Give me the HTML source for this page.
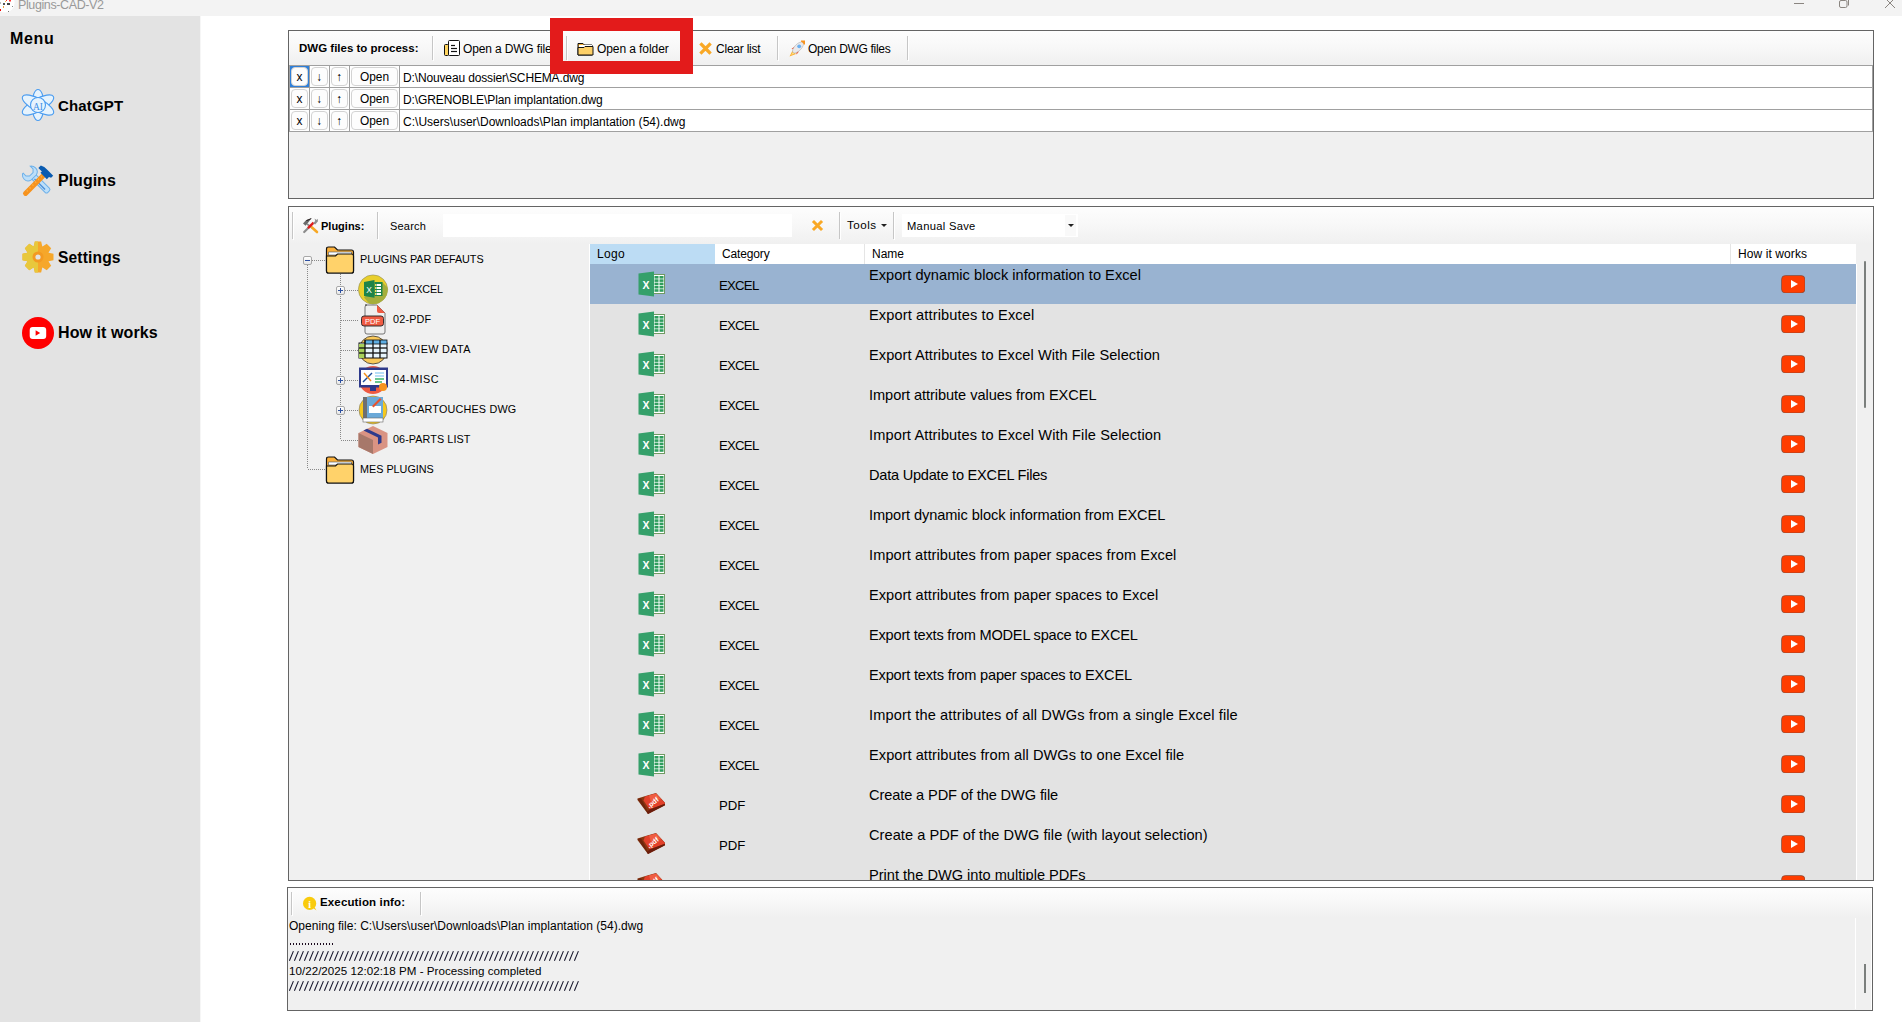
<!DOCTYPE html>
<html><head><meta charset="utf-8"><title>Plugins-CAD-V2</title>
<style>
html,body{margin:0;padding:0;width:1902px;height:1022px;overflow:hidden;background:#fff;font-family:"Liberation Sans", sans-serif;}
.a{position:absolute;}
.t{position:absolute;white-space:pre;line-height:1;font-family:"Liberation Sans", sans-serif;color:#000;}
</style></head><body>
<div class="a" style="left:0px;top:0px;width:1902px;height:16px;background:#f3f3f3"></div><svg class="a" style="left:0px;top:0px;overflow:visible" width="14" height="13" viewBox="0 0 14 13"><circle cx="5" cy="3" r="9.6" fill="#fff"/><rect x="6" y="0" width="1" height="1" fill="#f33"/><rect x="9" y="0" width="2" height="1.5" fill="#f33"/><rect x="0" y="9" width="1" height="2" fill="#e00"/><rect x="3" y="3" width="2" height="2" fill="#555"/><rect x="7" y="3" width="3" height="2" fill="#444"/><rect x="3" y="6" width="1" height="2" fill="#f0a040"/><rect x="5" y="1" width="1" height="1" fill="#f5c040"/><rect x="12" y="6" width="1" height="1" fill="#888"/><rect x="8" y="11" width="1" height="1" fill="#777"/><rect x="0" y="2" width="1" height="2" fill="#bbb"/></svg><div class="t" style="left:18px;top:-0.78px;font-size:12.5px;font-weight:normal;color:#999;letter-spacing:-0.385px;">Plugins-CAD-V2</div><div class="a" style="left:1794px;top:3px;width:10px;height:1px;background:#8a8580"></div><svg class="a" style="left:1838px;top:0px;overflow:visible" width="12" height="9" viewBox="0 0 12 9"><rect x="1.5" y="0.5" width="7.5" height="7" rx="1.5" fill="none" stroke="#8a8580" stroke-width="1"/><line x1="10.5" y1="0" x2="10.5" y2="5.5" stroke="#8a8580"/></svg><svg class="a" style="left:1885px;top:0px;overflow:visible" width="10" height="8" viewBox="0 0 10 8"><line x1="0" y1="-2" x2="10" y2="8" stroke="#8a8580"/><line x1="10" y1="-2" x2="0" y2="8" stroke="#8a8580"/></svg><div class="a" style="left:0px;top:16px;width:200px;height:1006px;background:#e3e3e3"></div><div class="a" style="left:200px;top:16px;width:1px;height:1006px;background:#f6f6f6"></div><div class="t" style="left:10px;top:30.96px;font-size:16px;font-weight:bold;color:#000;letter-spacing:0.667px;">Menu</div><div class="t" style="left:58px;top:98.30px;font-size:15px;font-weight:bold;color:#000;letter-spacing:0.167px;">ChatGPT</div><div class="t" style="left:58px;top:173.46px;font-size:16px;font-weight:bold;color:#000;letter-spacing:0.000px;">Plugins</div><div class="t" style="left:58px;top:249.79px;font-size:15.6px;font-weight:bold;color:#000;letter-spacing:0.143px;">Settings</div><div class="t" style="left:58px;top:325.46px;font-size:16px;font-weight:bold;color:#000;letter-spacing:0.091px;">How it works</div><svg class="a" style="left:22px;top:89px;overflow:visible" width="32" height="32" viewBox="0 0 32 32"><g fill="#e6f3fd" stroke="#4a9cf0" stroke-width="1.1">
<ellipse cx="16" cy="16" rx="6" ry="15.5" />
<ellipse cx="16" cy="16" rx="6.2" ry="17.6" transform="rotate(61 16 16)"/>
<ellipse cx="16" cy="16" rx="6.2" ry="17.6" transform="rotate(-61 16 16)"/>
<circle cx="16" cy="16" r="7.5"/></g>
<text x="16" y="20.5" text-anchor="middle" font-family="Liberation Serif" font-size="9.5" fill="#3f8fe6">AI</text></svg><svg class="a" style="left:22px;top:165px;overflow:visible" width="32" height="32" viewBox="0 0 32 32"><g transform="rotate(-45 16 16)">
<path d="M13 9 h6 v20 q0 2-2 2 h-2 q-2 0-2-2z" fill="#bddff9" stroke="#6cb0ea" stroke-width="1"/>
<path d="M15 12 v15" stroke="#4b8fd8" stroke-width="1.4"/>
<path d="M11 0 v4 l2.5 2.5 h5 l2.5-2.5 v-4 q2.5 2 2.5 5 q0 4.5-4.5 5.5 h-7 q-4.5-1-4.5-5.5 q0-3 2.5-5z" fill="#bddff9" stroke="#6cb0ea" stroke-width="1"/>
</g>
<g transform="rotate(45 16 16)">
<path d="M13.5 8 h5 v26 q0 2-2.5 2 q-2.5 0-2.5-2z" fill="#f7931e"/>
<path d="M14.5 10 l1.5 1 M14.5 14 l1.5 1 M14.5 18 l1.5 1 M14.5 22 l1.5 1 M14.5 26 l1.5 1 M14.5 30 l1.5 1" stroke="#fdb94e" stroke-width=".8"/>
<path d="M7 3 q3-2 8-1.5 h8 v3 l-2 1 v3 h-9 v-2 h-5z" fill="#0a5bb0"/>
</g></svg><svg class="a" style="left:22px;top:241px;overflow:visible" width="32" height="32" viewBox="0 0 32 32"><defs><clipPath id="gl"><rect x="0" y="0" width="16" height="32"/></clipPath></defs>
<path d="M11.73 5.32 L12.86 0.51 L19.14 0.51 L20.27 5.32 L20.54 5.43 L24.73 2.83 L29.17 7.27 L26.57 11.46 L26.68 11.73 L31.49 12.86 L31.49 19.14 L26.68 20.27 L26.57 20.54 L29.17 24.73 L24.73 29.17 L20.54 26.57 L20.27 26.68 L19.14 31.49 L12.86 31.49 L11.73 26.68 L11.46 26.57 L7.27 29.17 L2.83 24.73 L5.43 20.54 L5.32 20.27 L0.51 19.14 L0.51 12.86 L5.32 11.73 L5.43 11.46 L2.83 7.27 L7.27 2.83 L11.46 5.43z" fill="#f6a72a"/><path d="M11.73 5.32 L12.86 0.51 L19.14 0.51 L20.27 5.32 L20.54 5.43 L24.73 2.83 L29.17 7.27 L26.57 11.46 L26.68 11.73 L31.49 12.86 L31.49 19.14 L26.68 20.27 L26.57 20.54 L29.17 24.73 L24.73 29.17 L20.54 26.57 L20.27 26.68 L19.14 31.49 L12.86 31.49 L11.73 26.68 L11.46 26.57 L7.27 29.17 L2.83 24.73 L5.43 20.54 L5.32 20.27 L0.51 19.14 L0.51 12.86 L5.32 11.73 L5.43 11.46 L2.83 7.27 L7.27 2.83 L11.46 5.43z" fill="#e8c83c" clip-path="url(#gl)"/>
<circle cx="16" cy="16" r="5.5" fill="#f39a22"/><circle cx="16" cy="16" r="2.6" fill="#e3e3e3"/></svg><svg class="a" style="left:22px;top:317px;overflow:visible" width="32" height="32" viewBox="0 0 32 32"><circle cx="16" cy="16" r="16" fill="#f00"/><rect x="7.7" y="10" width="16.5" height="12" rx="3" fill="#fff"/><path d="M13.6 13.3 L18.2 16 L13.6 18.7z" fill="#f00"/></svg><div class="a" style="left:288px;top:30px;width:1586px;height:169px;background:#fff;border:1px solid #646464;box-sizing:border-box"></div><div class="a" style="left:289px;top:31px;width:1584px;height:34px;background:linear-gradient(#fdfdfd,#f8f8f8 45%,#f0f0f0)"></div><div class="a" style="left:289px;top:131px;width:1584px;height:67px;background:#f0f0f0"></div><div class="t" style="left:299px;top:43.27px;font-size:11.5px;font-weight:bold;color:#000;letter-spacing:0.000px;">DWG files to process:</div><div class="a" style="left:432px;top:36px;width:1px;height:24px;background:#c6c6c6"></div><div class="a" style="left:433px;top:37px;width:1px;height:24px;background:#fff"></div><svg class="a" style="left:444px;top:40px;overflow:visible" width="16" height="16" viewBox="0 0 16 16"><rect x="4.5" y="0.5" width="11" height="15" rx="1" fill="#fff" stroke="#111"/><rect x="0.5" y="4.5" width="4" height="11" rx="1" fill="#ffd45e" stroke="#111"/>
<g stroke="#111" stroke-width="1.2"><line x1="7" y1="5.5" x2="11" y2="5.5"/><line x1="7" y1="8.5" x2="13" y2="8.5"/><line x1="7" y1="11.5" x2="13" y2="11.5"/></g></svg><div class="t" style="left:463px;top:42.84px;font-size:12px;font-weight:normal;color:#000;letter-spacing:-0.15px">Open a DWG file</div><div class="a" style="left:566px;top:36px;width:1px;height:24px;background:#c6c6c6"></div><div class="a" style="left:567px;top:37px;width:1px;height:24px;background:#fff"></div><svg class="a" style="left:577px;top:41px;overflow:visible" width="17" height="15" viewBox="0 0 17 15"><path d="M1 2.5 h5 l1.5 1.5 h7.5 v10 h-14z" fill="#f9b233" stroke="#111"/><rect x="2" y="4" width="13" height="2" fill="#fff"/><path d="M1 6.5 h6 l1-1 h8 v8.5 h-15z" fill="#fdd068" stroke="#111"/></svg><div class="t" style="left:597px;top:42.84px;font-size:12px;font-weight:normal;color:#000;letter-spacing:-0.083px;">Open a folder</div><div class="a" style="left:684px;top:36px;width:1px;height:24px;background:#c6c6c6"></div><div class="a" style="left:685px;top:37px;width:1px;height:24px;background:#fff"></div><svg class="a" style="left:699px;top:42px;overflow:visible" width="13" height="13" viewBox="0 0 13 13"><path d="M2.5 2.5 L10.5 10.5 M10.5 2.5 L2.5 10.5" stroke="#f9a825" stroke-width="3.2" stroke-linecap="square"/></svg><div class="t" style="left:716px;top:42.84px;font-size:12px;font-weight:normal;color:#000;letter-spacing:-0.222px;">Clear list</div><div class="a" style="left:777px;top:36px;width:1px;height:24px;background:#c6c6c6"></div><div class="a" style="left:778px;top:37px;width:1px;height:24px;background:#fff"></div><svg class="a" style="left:789px;top:40px;overflow:visible" width="16" height="17" viewBox="0 0 16 17"><path d="M0.5 16.5 l3-6 3.5 3.5z" fill="#fbb034"/><path d="M2 15 l2-3 1.5 1.5z" fill="#ffe082"/>
<path d="M2.5 9 l3-2.5 1 3z M7.5 14.5 l2.5-3 -3-1z" fill="#ef4b25"/>
<ellipse cx="9" cy="7.5" rx="3.3" ry="7" transform="rotate(45 9 7.5)" fill="#e9e9ec" stroke="#b5b5b5" stroke-width=".6"/>
<circle cx="10.2" cy="6.3" r="1.9" fill="#6ab0f0"/>
<path d="M12 0.5 h4 v4 l-1.2 0 c-.5-1.5-1.5-2.5-2.8-2.8z" fill="#f7931e"/></svg><div class="t" style="left:808px;top:42.84px;font-size:12px;font-weight:normal;color:#000;letter-spacing:-0.308px;">Open DWG files</div><div class="a" style="left:907px;top:36px;width:1px;height:24px;background:#c6c6c6"></div><div class="a" style="left:908px;top:37px;width:1px;height:24px;background:#fff"></div><div class="a" style="left:289px;top:65px;width:1584px;height:1px;background:#a0a0a0"></div><div class="a" style="left:289px;top:66px;width:1583px;height:21px;background:#fff"></div><div class="a" style="left:289px;top:87px;width:1584px;height:1px;background:#a0a0a0"></div><div class="a" style="left:290px;top:66px;width:19px;height:21px;background:#2f7fd8"></div><div class="a" style="left:291px;top:67px;width:17px;height:19px;background:#fdfdfd;border:1px solid #d3d3d3;border-radius:4px;box-sizing:border-box"></div><div class="t" style="left:290px;top:71.53px;width:19px;text-align:center;font-size:11.9px">x</div><div class="a" style="left:311px;top:67px;width:17px;height:19px;background:#fdfdfd;border:1px solid #d3d3d3;border-radius:4px;box-sizing:border-box"></div><div class="t" style="left:310px;top:71.53px;width:19px;text-align:center;font-size:11.9px">&#8595;</div><div class="a" style="left:331px;top:67px;width:17px;height:19px;background:#fdfdfd;border:1px solid #d3d3d3;border-radius:4px;box-sizing:border-box"></div><div class="t" style="left:330px;top:71.53px;width:19px;text-align:center;font-size:11.9px">&#8593;</div><div class="a" style="left:351px;top:67px;width:47px;height:19px;background:#fdfdfd;border:1px solid #d3d3d3;border-radius:4px;box-sizing:border-box"></div><div class="t" style="left:350px;top:71.53px;width:49px;text-align:center;font-size:11.9px">Open</div><div class="a" style="left:289px;top:66px;width:1px;height:21px;background:#a0a0a0"></div><div class="a" style="left:309px;top:66px;width:1px;height:21px;background:#a0a0a0"></div><div class="a" style="left:329px;top:66px;width:1px;height:21px;background:#a0a0a0"></div><div class="a" style="left:349px;top:66px;width:1px;height:21px;background:#a0a0a0"></div><div class="a" style="left:399px;top:66px;width:1px;height:21px;background:#a0a0a0"></div><div class="a" style="left:1872px;top:66px;width:1px;height:21px;background:#a0a0a0"></div><div class="t" style="left:403px;top:71.84px;font-size:12px;font-weight:normal;color:#000;letter-spacing:-0.143px;">D:\Nouveau dossier\SCHEMA.dwg</div><div class="a" style="left:289px;top:88px;width:1583px;height:21px;background:#fff"></div><div class="a" style="left:289px;top:109px;width:1584px;height:1px;background:#a0a0a0"></div><div class="a" style="left:291px;top:89px;width:17px;height:19px;background:#fdfdfd;border:1px solid #d3d3d3;border-radius:4px;box-sizing:border-box"></div><div class="t" style="left:290px;top:93.53px;width:19px;text-align:center;font-size:11.9px">x</div><div class="a" style="left:311px;top:89px;width:17px;height:19px;background:#fdfdfd;border:1px solid #d3d3d3;border-radius:4px;box-sizing:border-box"></div><div class="t" style="left:310px;top:93.53px;width:19px;text-align:center;font-size:11.9px">&#8595;</div><div class="a" style="left:331px;top:89px;width:17px;height:19px;background:#fdfdfd;border:1px solid #d3d3d3;border-radius:4px;box-sizing:border-box"></div><div class="t" style="left:330px;top:93.53px;width:19px;text-align:center;font-size:11.9px">&#8593;</div><div class="a" style="left:351px;top:89px;width:47px;height:19px;background:#fdfdfd;border:1px solid #d3d3d3;border-radius:4px;box-sizing:border-box"></div><div class="t" style="left:350px;top:93.53px;width:49px;text-align:center;font-size:11.9px">Open</div><div class="a" style="left:289px;top:88px;width:1px;height:21px;background:#a0a0a0"></div><div class="a" style="left:309px;top:88px;width:1px;height:21px;background:#a0a0a0"></div><div class="a" style="left:329px;top:88px;width:1px;height:21px;background:#a0a0a0"></div><div class="a" style="left:349px;top:88px;width:1px;height:21px;background:#a0a0a0"></div><div class="a" style="left:399px;top:88px;width:1px;height:21px;background:#a0a0a0"></div><div class="a" style="left:1872px;top:88px;width:1px;height:21px;background:#a0a0a0"></div><div class="t" style="left:403px;top:93.84px;font-size:12px;font-weight:normal;color:#000;letter-spacing:-0.094px;">D:\GRENOBLE\Plan implantation.dwg</div><div class="a" style="left:289px;top:110px;width:1583px;height:21px;background:#fff"></div><div class="a" style="left:289px;top:131px;width:1584px;height:1px;background:#a0a0a0"></div><div class="a" style="left:291px;top:111px;width:17px;height:19px;background:#fdfdfd;border:1px solid #d3d3d3;border-radius:4px;box-sizing:border-box"></div><div class="t" style="left:290px;top:115.53px;width:19px;text-align:center;font-size:11.9px">x</div><div class="a" style="left:311px;top:111px;width:17px;height:19px;background:#fdfdfd;border:1px solid #d3d3d3;border-radius:4px;box-sizing:border-box"></div><div class="t" style="left:310px;top:115.53px;width:19px;text-align:center;font-size:11.9px">&#8595;</div><div class="a" style="left:331px;top:111px;width:17px;height:19px;background:#fdfdfd;border:1px solid #d3d3d3;border-radius:4px;box-sizing:border-box"></div><div class="t" style="left:330px;top:115.53px;width:19px;text-align:center;font-size:11.9px">&#8593;</div><div class="a" style="left:351px;top:111px;width:47px;height:19px;background:#fdfdfd;border:1px solid #d3d3d3;border-radius:4px;box-sizing:border-box"></div><div class="t" style="left:350px;top:115.53px;width:49px;text-align:center;font-size:11.9px">Open</div><div class="a" style="left:289px;top:110px;width:1px;height:21px;background:#a0a0a0"></div><div class="a" style="left:309px;top:110px;width:1px;height:21px;background:#a0a0a0"></div><div class="a" style="left:329px;top:110px;width:1px;height:21px;background:#a0a0a0"></div><div class="a" style="left:349px;top:110px;width:1px;height:21px;background:#a0a0a0"></div><div class="a" style="left:399px;top:110px;width:1px;height:21px;background:#a0a0a0"></div><div class="a" style="left:1872px;top:110px;width:1px;height:21px;background:#a0a0a0"></div><div class="t" style="left:403px;top:115.84px;font-size:12px;font-weight:normal;color:#000;letter-spacing:0.020px;">C:\Users\user\Downloads\Plan implantation (54).dwg</div><div class="a" style="left:550px;top:18px;width:143px;height:56px;border:13px solid #e31b1b;box-sizing:border-box"></div><div class="a" style="left:288px;top:206px;width:1586px;height:675px;background:#fff;border:1px solid #646464;box-sizing:border-box"></div><div class="a" style="left:289px;top:207px;width:1584px;height:37px;background:linear-gradient(#fdfdfd,#f8f8f8 45%,#f0f0f0)"></div><div class="a" style="left:289px;top:243px;width:1584px;height:637px;background:#f0f0f0"></div><div class="a" style="left:292px;top:212px;width:1px;height:27px;background:#c6c6c6"></div><div class="a" style="left:293px;top:213px;width:1px;height:27px;background:#fff"></div><svg class="a" style="left:302px;top:217px;overflow:visible" width="16" height="16" viewBox="0 0 16 16"><path d="M5 7 L10.5 11" stroke="#8a8a8a" stroke-width="1.6"/>
<path d="M10 10.5 L15 15" stroke="#f7a823" stroke-width="2.6" stroke-linecap="round"/>
<path d="M1 6.5 L4 3.2 L9.7 1 L6.8 4.8 L3.6 8.8z" fill="#6a6a6a"/><path d="M4 3.2 L9.7 1 L8.5 2.5 L5 4z" fill="#2a2222"/>
<path d="M2.2 15 L6.5 10.7" stroke="#8c8c8c" stroke-width="2.2" stroke-linecap="round"/>
<path d="M6 11.2 L11.6 5.6" stroke="#e01b1b" stroke-width="2.4"/>
<path d="M11 6.2 L13.2 4 L12.6 1.4 L14.4 3 L15.6 1.8 L16 4.2 L13.2 7.4z" fill="#8f8f8f"/></svg><div class="t" style="left:321px;top:220.69px;font-size:11px;font-weight:bold;color:#000;letter-spacing:0.000px;">Plugins:</div><div class="a" style="left:377px;top:212px;width:1px;height:27px;background:#c6c6c6"></div><div class="a" style="left:378px;top:213px;width:1px;height:27px;background:#fff"></div><div class="t" style="left:390px;top:220.69px;font-size:11px;font-weight:normal;color:#000;letter-spacing:0.200px;">Search</div><div class="a" style="left:443px;top:214px;width:349px;height:23px;background:#fff"></div><svg class="a" style="left:811px;top:219px;overflow:visible" width="13" height="13" viewBox="0 0 13 13"><path d="M3 3 L10 10 M10 3 L3 10" stroke="#f9a825" stroke-width="3" stroke-linecap="square"/></svg><div class="a" style="left:839px;top:212px;width:1px;height:27px;background:#c6c6c6"></div><div class="a" style="left:840px;top:213px;width:1px;height:27px;background:#fff"></div><div class="t" style="left:847px;top:218.68px;font-size:11.6px;font-weight:normal;color:#000;letter-spacing:0.500px;">Tools</div><svg class="a" style="left:881px;top:224px;overflow:visible" width="6" height="4" viewBox="0 0 6 4"><path d="M0 0 h6 l-3 3z" fill="#222"/></svg><div class="a" style="left:893px;top:212px;width:1px;height:27px;background:#c6c6c6"></div><div class="a" style="left:894px;top:213px;width:1px;height:27px;background:#fff"></div><div class="a" style="left:902px;top:214px;width:176px;height:23px;background:#fff"></div><div class="a" style="left:1065px;top:215px;width:11px;height:21px;background:#f9f9f9"></div><div class="t" style="left:907px;top:220.52px;font-size:11.2px;font-weight:normal;color:#000;letter-spacing:0.300px;">Manual Save</div><svg class="a" style="left:1068px;top:224px;overflow:visible" width="6" height="4" viewBox="0 0 6 4"><path d="M0 0 h6 l-3 3z" fill="#222"/></svg><div class="a" style="left:307px;top:265px;width:1px;height:204px;background:repeating-linear-gradient(180deg,#888 0 1px,transparent 1px 2px)"></div><div class="a" style="left:312px;top:260px;width:13px;height:1px;background:repeating-linear-gradient(90deg,#888 0 1px,transparent 1px 2px)"></div><div class="a" style="left:303px;top:256px;width:9px;height:9px;background:linear-gradient(#fff,#e6e6e6);border:1px solid #a8a8a8;border-radius:2px;box-sizing:border-box"></div><div class="a" style="left:305px;top:260px;width:5px;height:1px;background:#2c4fa0"></div><div class="a" style="left:308px;top:469px;width:17px;height:1px;background:repeating-linear-gradient(90deg,#888 0 1px,transparent 1px 2px)"></div><div class="a" style="left:340px;top:274px;width:1px;height:165px;background:repeating-linear-gradient(180deg,#888 0 1px,transparent 1px 2px)"></div><svg class="a" style="left:325px;top:246px;overflow:visible" width="30" height="28" viewBox="0 0 30 28"><path d="M1.5 3 q0-2 2-2 h6 l3 3 h14 q2 0 2 2 v19 q0 2-2 2 h-23 q-2 0-2-2z" fill="#fbb03b" stroke="#111" stroke-width="1.2"/>
<path d="M3.5 6 h23 v3 h-23z" fill="#fff" stroke="#456" stroke-width=".6"/>
<path d="M1.5 10 h9 l2-2 h14 q2 0 2 2 v15 q0 2-2 2 h-23 q-2 0-2-2z" fill="#ffd26a" stroke="#111" stroke-width="1.2"/></svg><div class="t" style="left:360px;top:253.86px;font-size:10.8px;font-weight:normal;color:#000;letter-spacing:-0.056px;">PLUGINS PAR DEFAUTS</div><svg class="a" style="left:325px;top:456px;overflow:visible" width="30" height="28" viewBox="0 0 30 28"><path d="M1.5 3 q0-2 2-2 h6 l3 3 h14 q2 0 2 2 v19 q0 2-2 2 h-23 q-2 0-2-2z" fill="#fbb03b" stroke="#111" stroke-width="1.2"/>
<path d="M3.5 6 h23 v3 h-23z" fill="#fff" stroke="#456" stroke-width=".6"/>
<path d="M1.5 10 h9 l2-2 h14 q2 0 2 2 v15 q0 2-2 2 h-23 q-2 0-2-2z" fill="#ffd26a" stroke="#111" stroke-width="1.2"/></svg><div class="t" style="left:360px;top:463.86px;font-size:10.8px;font-weight:normal;color:#000;letter-spacing:0.000px;">MES PLUGINS</div><div class="a" style="left:341px;top:290px;width:17px;height:1px;background:repeating-linear-gradient(90deg,#888 0 1px,transparent 1px 2px)"></div><div class="a" style="left:336px;top:286px;width:9px;height:9px;background:linear-gradient(#fff,#e6e6e6);border:1px solid #a8a8a8;border-radius:2px;box-sizing:border-box"></div><div class="a" style="left:338px;top:290px;width:5px;height:1px;background:#2c4fa0"></div><div class="a" style="left:340px;top:288px;width:1px;height:5px;background:#2c4fa0"></div><div class="t" style="left:393px;top:283.86px;font-size:10.8px;font-weight:normal;color:#000;letter-spacing:-0.143px;">01-EXCEL</div><div class="a" style="left:341px;top:320px;width:17px;height:1px;background:repeating-linear-gradient(90deg,#888 0 1px,transparent 1px 2px)"></div><div class="t" style="left:393px;top:313.86px;font-size:10.8px;font-weight:normal;color:#000;letter-spacing:0.200px;">02-PDF</div><div class="a" style="left:341px;top:350px;width:17px;height:1px;background:repeating-linear-gradient(90deg,#888 0 1px,transparent 1px 2px)"></div><div class="t" style="left:393px;top:343.86px;font-size:10.8px;font-weight:normal;color:#000;letter-spacing:0.364px;">03-VIEW DATA</div><div class="a" style="left:341px;top:380px;width:17px;height:1px;background:repeating-linear-gradient(90deg,#888 0 1px,transparent 1px 2px)"></div><div class="a" style="left:336px;top:376px;width:9px;height:9px;background:linear-gradient(#fff,#e6e6e6);border:1px solid #a8a8a8;border-radius:2px;box-sizing:border-box"></div><div class="a" style="left:338px;top:380px;width:5px;height:1px;background:#2c4fa0"></div><div class="a" style="left:340px;top:378px;width:1px;height:5px;background:#2c4fa0"></div><div class="t" style="left:393px;top:373.86px;font-size:10.8px;font-weight:normal;color:#000;letter-spacing:0.500px;">04-MISC</div><div class="a" style="left:341px;top:410px;width:17px;height:1px;background:repeating-linear-gradient(90deg,#888 0 1px,transparent 1px 2px)"></div><div class="a" style="left:336px;top:406px;width:9px;height:9px;background:linear-gradient(#fff,#e6e6e6);border:1px solid #a8a8a8;border-radius:2px;box-sizing:border-box"></div><div class="a" style="left:338px;top:410px;width:5px;height:1px;background:#2c4fa0"></div><div class="a" style="left:340px;top:408px;width:1px;height:5px;background:#2c4fa0"></div><div class="t" style="left:393px;top:403.86px;font-size:10.8px;font-weight:normal;color:#000;letter-spacing:0.188px;">05-CARTOUCHES DWG</div><div class="a" style="left:341px;top:440px;width:17px;height:1px;background:repeating-linear-gradient(90deg,#888 0 1px,transparent 1px 2px)"></div><div class="t" style="left:393px;top:433.86px;font-size:10.8px;font-weight:normal;color:#000;letter-spacing:0.083px;">06-PARTS LIST</div><svg class="a" style="left:358px;top:275px;overflow:visible" width="30" height="30" viewBox="0 0 30 30"><defs><clipPath id="cc"><circle cx="15" cy="14.5" r="14.6"/></clipPath></defs>
<circle cx="15" cy="14.5" r="14.6" fill="#e9cf2c" stroke="#7a7a50" stroke-width=".5"/>
<path d="M24 7 L40 23 L22 41 L6 22.5z" fill="#a5ae3c" clip-path="url(#cc)"/>
<path d="M6 7 L16.5 5 V22.8 L6 21z" fill="#1e8449"/><rect x="16.5" y="7" width="8" height="14" fill="#1e8449"/>
<g fill="#fff"><rect x="18.5" y="9" width="4.5" height="2"/><rect x="18.5" y="12" width="4.5" height="2"/><rect x="18.5" y="15" width="4.5" height="2"/><rect x="18.5" y="18" width="4.5" height="2"/></g>
<g fill="#f4e04d"><rect x="17" y="9" width="1" height="2"/><rect x="17" y="12" width="1" height="2"/><rect x="17" y="15" width="1" height="2"/><rect x="17" y="18" width="1" height="2"/></g>
<text x="11.2" y="17.5" text-anchor="middle" font-family="Liberation Sans" font-size="8.5" fill="#fff">X</text></svg><svg class="a" style="left:358px;top:305px;overflow:visible" width="30" height="30" viewBox="0 0 30 30"><path d="M7 0 h12 l8 8 v19 q0 2-2 2 h-16 q-2 0-2-2 v-25 q0-2 2-2z" fill="#efefef" stroke="#555" stroke-width=".8"/><path d="M19 0 l8 8 h-6 q-2 0-2-2z" fill="#ef5a42"/>
<rect x="3.5" y="11" width="22" height="10" rx="2.5" fill="#ef5a42" stroke="#222" stroke-width=".9"/><text x="14.5" y="19.3" text-anchor="middle" font-family="Liberation Sans" font-size="7.5" fill="#fff">PDF</text></svg><svg class="a" style="left:358px;top:335px;overflow:visible" width="30" height="30" viewBox="0 0 30 30"><circle cx="15" cy="15" r="14" fill="#fbc95a" stroke="#333" stroke-width=".8"/>
<rect x="1" y="8" width="28" height="15" fill="#e8f6fd" stroke="#111"/><rect x="7" y="5" width="22" height="4" fill="#5dade2" stroke="#111" stroke-width=".8"/>
<rect x="1" y="9" width="6" height="14" fill="#a8d15b"/><g stroke="#111" stroke-width="1.3"><line x1="1" y1="13" x2="29" y2="13"/><line x1="1" y1="18" x2="29" y2="18"/><line x1="7" y1="5" x2="7" y2="23"/><line x1="15" y1="5" x2="15" y2="23"/><line x1="22" y1="5" x2="22" y2="23"/></g></svg><svg class="a" style="left:358px;top:365px;overflow:visible" width="30" height="30" viewBox="0 0 30 30"><circle cx="15" cy="15" r="14" fill="#ef5a42"/><rect x="1" y="2.5" width="29" height="20" fill="#2e3a8c"/><rect x="3" y="5" width="25" height="15" fill="#fff"/>
<path d="M5 17 L14 8" stroke="#1d4c9b" stroke-width="1.5"/><path d="M6 8 L13 16" stroke="#f7931e" stroke-width="1.5"/><g stroke-width="1.5"><line x1="17" y1="8" x2="26" y2="8" stroke="#9fd3f5"/><line x1="17" y1="11" x2="26" y2="11" stroke="#9fd3f5"/><line x1="17" y1="14" x2="26" y2="14" stroke="#3bb56b"/><line x1="17" y1="17" x2="24" y2="17" stroke="#3bb56b"/></g>
<rect x="12" y="22" width="6" height="4" fill="#2e3a8c"/><circle cx="25" cy="22" r="4" fill="#f7931e"/></svg><svg class="a" style="left:358px;top:395px;overflow:visible" width="30" height="30" viewBox="0 0 30 30"><circle cx="15" cy="15" r="14" fill="#f6c81c" stroke="#777" stroke-width=".6"/><rect x="5" y="2" width="20" height="22" fill="#6ba9d8"/><rect x="5" y="2" width="4" height="22" fill="#6f6f6f"/>
<rect x="5" y="23" width="20" height="4" fill="#fff" stroke="#666" stroke-width=".6"/><rect x="11" y="11" width="12" height="7" fill="#fff"/><path d="M14 11 l8-8 1.5 1.5 -8 8z" fill="#e8532e"/></svg><svg class="a" style="left:358px;top:425px;overflow:visible" width="30" height="30" viewBox="0 0 30 30"><path d="M0.5 8 l14.5-7 14.5 7 v14 l-14.5 7 -14.5-7z" fill="#d99383"/><path d="M0.5 8 l14.5 7 v14 l-14.5-7z" fill="#a7786a"/><path d="M5.5 5.5 l14.5 7 v7 l3.5-1.7 v-7 l-14.5-7z" fill="#2e3a8c"/></svg><div class="a" style="left:589px;top:244px;width:1px;height:636px;background:#fff"></div><div class="a" style="left:590px;top:244px;width:1266px;height:20px;background:#fff"></div><div class="a" style="left:590px;top:244px;width:125px;height:20px;background:#bcdcf4"></div><div class="a" style="left:864px;top:244px;width:1px;height:20px;background:#e5e5e5"></div><div class="a" style="left:1730px;top:244px;width:1px;height:20px;background:#e5e5e5"></div><div class="t" style="left:597px;top:247.84px;font-size:12px;font-weight:normal;color:#000;letter-spacing:0.333px;">Logo</div><div class="t" style="left:722px;top:247.84px;font-size:12px;font-weight:normal;color:#000;letter-spacing:-0.143px;">Category</div><div class="t" style="left:872px;top:247.84px;font-size:12px;font-weight:normal;color:#000;letter-spacing:0.000px;">Name</div><div class="t" style="left:1738px;top:247.84px;font-size:12px;font-weight:normal;color:#000;letter-spacing:0.091px;">How it works</div><div class="a" style="left:590px;top:264px;width:1266px;height:616px;overflow:hidden"><div class="a" style="left:0;top:0px;width:1266px;height:40px;background:#99b3d1"></div><svg class="a" style="left:47px;top:7px" width="28" height="26" viewBox="0 0 28 26"><rect x="16.5" y="3.5" width="11" height="19" fill="#fff" stroke="#6f9a62" stroke-width="1"/>
<g fill="#2f9e5e"><rect x="17.5" y="5" width="4" height="2.6"/><rect x="22.5" y="5" width="4" height="2.6"/><rect x="17.5" y="8.3" width="4" height="2.6"/><rect x="22.5" y="8.3" width="4" height="2.6"/><rect x="17.5" y="11.6" width="4" height="2.6"/><rect x="22.5" y="11.6" width="4" height="2.6"/><rect x="17.5" y="14.9" width="4" height="2.6"/><rect x="22.5" y="14.9" width="4" height="2.6"/><rect x="17.5" y="18.2" width="4" height="2.6"/><rect x="22.5" y="18.2" width="4" height="2.6"/></g>
<path d="M1.5 2.5 L17 0.5 V25.5 L1.5 23.5z" fill="#35a06a"/>
<text x="9" y="17.5" text-anchor="middle" font-family="Liberation Sans" font-size="10.5" font-weight="bold" fill="#fff">X</text></svg><div class="t" style="left:129px;top:14.83px;font-size:13.2px;letter-spacing:-0.75px">EXCEL</div><div class="t" style="left:279px;top:3.64px;font-size:14.6px;letter-spacing:0.025px">Export dynamic block information to Excel</div><svg class="a" style="left:1191px;top:11px" width="24" height="18" viewBox="0 0 24 18"><rect x=".5" y=".5" width="23.5" height="17.5" rx="4" fill="#ff3d00" stroke="#6a4a40" stroke-width=".6"/><path d="M10 5 L17 9 L10 13z" fill="#fff"/></svg><div class="a" style="left:0;top:40px;width:1266px;height:40px;background:#e3e3e3"></div><svg class="a" style="left:47px;top:47px" width="28" height="26" viewBox="0 0 28 26"><rect x="16.5" y="3.5" width="11" height="19" fill="#fff" stroke="#6f9a62" stroke-width="1"/>
<g fill="#2f9e5e"><rect x="17.5" y="5" width="4" height="2.6"/><rect x="22.5" y="5" width="4" height="2.6"/><rect x="17.5" y="8.3" width="4" height="2.6"/><rect x="22.5" y="8.3" width="4" height="2.6"/><rect x="17.5" y="11.6" width="4" height="2.6"/><rect x="22.5" y="11.6" width="4" height="2.6"/><rect x="17.5" y="14.9" width="4" height="2.6"/><rect x="22.5" y="14.9" width="4" height="2.6"/><rect x="17.5" y="18.2" width="4" height="2.6"/><rect x="22.5" y="18.2" width="4" height="2.6"/></g>
<path d="M1.5 2.5 L17 0.5 V25.5 L1.5 23.5z" fill="#35a06a"/>
<text x="9" y="17.5" text-anchor="middle" font-family="Liberation Sans" font-size="10.5" font-weight="bold" fill="#fff">X</text></svg><div class="t" style="left:129px;top:54.83px;font-size:13.2px;letter-spacing:-0.75px">EXCEL</div><div class="t" style="left:279px;top:43.64px;font-size:14.6px;letter-spacing:0.120px">Export attributes to Excel</div><svg class="a" style="left:1191px;top:51px" width="24" height="18" viewBox="0 0 24 18"><rect x=".5" y=".5" width="23.5" height="17.5" rx="4" fill="#ff3d00" stroke="#6a4a40" stroke-width=".6"/><path d="M10 5 L17 9 L10 13z" fill="#fff"/></svg><div class="a" style="left:0;top:80px;width:1266px;height:40px;background:#e3e3e3"></div><svg class="a" style="left:47px;top:87px" width="28" height="26" viewBox="0 0 28 26"><rect x="16.5" y="3.5" width="11" height="19" fill="#fff" stroke="#6f9a62" stroke-width="1"/>
<g fill="#2f9e5e"><rect x="17.5" y="5" width="4" height="2.6"/><rect x="22.5" y="5" width="4" height="2.6"/><rect x="17.5" y="8.3" width="4" height="2.6"/><rect x="22.5" y="8.3" width="4" height="2.6"/><rect x="17.5" y="11.6" width="4" height="2.6"/><rect x="22.5" y="11.6" width="4" height="2.6"/><rect x="17.5" y="14.9" width="4" height="2.6"/><rect x="22.5" y="14.9" width="4" height="2.6"/><rect x="17.5" y="18.2" width="4" height="2.6"/><rect x="22.5" y="18.2" width="4" height="2.6"/></g>
<path d="M1.5 2.5 L17 0.5 V25.5 L1.5 23.5z" fill="#35a06a"/>
<text x="9" y="17.5" text-anchor="middle" font-family="Liberation Sans" font-size="10.5" font-weight="bold" fill="#fff">X</text></svg><div class="t" style="left:129px;top:94.83px;font-size:13.2px;letter-spacing:-0.75px">EXCEL</div><div class="t" style="left:279px;top:83.64px;font-size:14.6px;letter-spacing:0.067px">Export Attributes to Excel With File Selection</div><svg class="a" style="left:1191px;top:91px" width="24" height="18" viewBox="0 0 24 18"><rect x=".5" y=".5" width="23.5" height="17.5" rx="4" fill="#ff3d00" stroke="#6a4a40" stroke-width=".6"/><path d="M10 5 L17 9 L10 13z" fill="#fff"/></svg><div class="a" style="left:0;top:120px;width:1266px;height:40px;background:#e3e3e3"></div><svg class="a" style="left:47px;top:127px" width="28" height="26" viewBox="0 0 28 26"><rect x="16.5" y="3.5" width="11" height="19" fill="#fff" stroke="#6f9a62" stroke-width="1"/>
<g fill="#2f9e5e"><rect x="17.5" y="5" width="4" height="2.6"/><rect x="22.5" y="5" width="4" height="2.6"/><rect x="17.5" y="8.3" width="4" height="2.6"/><rect x="22.5" y="8.3" width="4" height="2.6"/><rect x="17.5" y="11.6" width="4" height="2.6"/><rect x="22.5" y="11.6" width="4" height="2.6"/><rect x="17.5" y="14.9" width="4" height="2.6"/><rect x="22.5" y="14.9" width="4" height="2.6"/><rect x="17.5" y="18.2" width="4" height="2.6"/><rect x="22.5" y="18.2" width="4" height="2.6"/></g>
<path d="M1.5 2.5 L17 0.5 V25.5 L1.5 23.5z" fill="#35a06a"/>
<text x="9" y="17.5" text-anchor="middle" font-family="Liberation Sans" font-size="10.5" font-weight="bold" fill="#fff">X</text></svg><div class="t" style="left:129px;top:134.83px;font-size:13.2px;letter-spacing:-0.75px">EXCEL</div><div class="t" style="left:279px;top:123.64px;font-size:14.6px;letter-spacing:-0.061px">Import attribute values from EXCEL</div><svg class="a" style="left:1191px;top:131px" width="24" height="18" viewBox="0 0 24 18"><rect x=".5" y=".5" width="23.5" height="17.5" rx="4" fill="#ff3d00" stroke="#6a4a40" stroke-width=".6"/><path d="M10 5 L17 9 L10 13z" fill="#fff"/></svg><div class="a" style="left:0;top:160px;width:1266px;height:40px;background:#e3e3e3"></div><svg class="a" style="left:47px;top:167px" width="28" height="26" viewBox="0 0 28 26"><rect x="16.5" y="3.5" width="11" height="19" fill="#fff" stroke="#6f9a62" stroke-width="1"/>
<g fill="#2f9e5e"><rect x="17.5" y="5" width="4" height="2.6"/><rect x="22.5" y="5" width="4" height="2.6"/><rect x="17.5" y="8.3" width="4" height="2.6"/><rect x="22.5" y="8.3" width="4" height="2.6"/><rect x="17.5" y="11.6" width="4" height="2.6"/><rect x="22.5" y="11.6" width="4" height="2.6"/><rect x="17.5" y="14.9" width="4" height="2.6"/><rect x="22.5" y="14.9" width="4" height="2.6"/><rect x="17.5" y="18.2" width="4" height="2.6"/><rect x="22.5" y="18.2" width="4" height="2.6"/></g>
<path d="M1.5 2.5 L17 0.5 V25.5 L1.5 23.5z" fill="#35a06a"/>
<text x="9" y="17.5" text-anchor="middle" font-family="Liberation Sans" font-size="10.5" font-weight="bold" fill="#fff">X</text></svg><div class="t" style="left:129px;top:174.83px;font-size:13.2px;letter-spacing:-0.75px">EXCEL</div><div class="t" style="left:279px;top:163.64px;font-size:14.6px;letter-spacing:0.111px">Import Attributes to Excel With File Selection</div><svg class="a" style="left:1191px;top:171px" width="24" height="18" viewBox="0 0 24 18"><rect x=".5" y=".5" width="23.5" height="17.5" rx="4" fill="#ff3d00" stroke="#6a4a40" stroke-width=".6"/><path d="M10 5 L17 9 L10 13z" fill="#fff"/></svg><div class="a" style="left:0;top:200px;width:1266px;height:40px;background:#e3e3e3"></div><svg class="a" style="left:47px;top:207px" width="28" height="26" viewBox="0 0 28 26"><rect x="16.5" y="3.5" width="11" height="19" fill="#fff" stroke="#6f9a62" stroke-width="1"/>
<g fill="#2f9e5e"><rect x="17.5" y="5" width="4" height="2.6"/><rect x="22.5" y="5" width="4" height="2.6"/><rect x="17.5" y="8.3" width="4" height="2.6"/><rect x="22.5" y="8.3" width="4" height="2.6"/><rect x="17.5" y="11.6" width="4" height="2.6"/><rect x="22.5" y="11.6" width="4" height="2.6"/><rect x="17.5" y="14.9" width="4" height="2.6"/><rect x="22.5" y="14.9" width="4" height="2.6"/><rect x="17.5" y="18.2" width="4" height="2.6"/><rect x="22.5" y="18.2" width="4" height="2.6"/></g>
<path d="M1.5 2.5 L17 0.5 V25.5 L1.5 23.5z" fill="#35a06a"/>
<text x="9" y="17.5" text-anchor="middle" font-family="Liberation Sans" font-size="10.5" font-weight="bold" fill="#fff">X</text></svg><div class="t" style="left:129px;top:214.83px;font-size:13.2px;letter-spacing:-0.75px">EXCEL</div><div class="t" style="left:279px;top:203.64px;font-size:14.6px;letter-spacing:-0.240px">Data Update to EXCEL Files</div><svg class="a" style="left:1191px;top:211px" width="24" height="18" viewBox="0 0 24 18"><rect x=".5" y=".5" width="23.5" height="17.5" rx="4" fill="#ff3d00" stroke="#6a4a40" stroke-width=".6"/><path d="M10 5 L17 9 L10 13z" fill="#fff"/></svg><div class="a" style="left:0;top:240px;width:1266px;height:40px;background:#e3e3e3"></div><svg class="a" style="left:47px;top:247px" width="28" height="26" viewBox="0 0 28 26"><rect x="16.5" y="3.5" width="11" height="19" fill="#fff" stroke="#6f9a62" stroke-width="1"/>
<g fill="#2f9e5e"><rect x="17.5" y="5" width="4" height="2.6"/><rect x="22.5" y="5" width="4" height="2.6"/><rect x="17.5" y="8.3" width="4" height="2.6"/><rect x="22.5" y="8.3" width="4" height="2.6"/><rect x="17.5" y="11.6" width="4" height="2.6"/><rect x="22.5" y="11.6" width="4" height="2.6"/><rect x="17.5" y="14.9" width="4" height="2.6"/><rect x="22.5" y="14.9" width="4" height="2.6"/><rect x="17.5" y="18.2" width="4" height="2.6"/><rect x="22.5" y="18.2" width="4" height="2.6"/></g>
<path d="M1.5 2.5 L17 0.5 V25.5 L1.5 23.5z" fill="#35a06a"/>
<text x="9" y="17.5" text-anchor="middle" font-family="Liberation Sans" font-size="10.5" font-weight="bold" fill="#fff">X</text></svg><div class="t" style="left:129px;top:254.83px;font-size:13.2px;letter-spacing:-0.75px">EXCEL</div><div class="t" style="left:279px;top:243.64px;font-size:14.6px;letter-spacing:-0.071px">Import dynamic block information from EXCEL</div><svg class="a" style="left:1191px;top:251px" width="24" height="18" viewBox="0 0 24 18"><rect x=".5" y=".5" width="23.5" height="17.5" rx="4" fill="#ff3d00" stroke="#6a4a40" stroke-width=".6"/><path d="M10 5 L17 9 L10 13z" fill="#fff"/></svg><div class="a" style="left:0;top:280px;width:1266px;height:40px;background:#e3e3e3"></div><svg class="a" style="left:47px;top:287px" width="28" height="26" viewBox="0 0 28 26"><rect x="16.5" y="3.5" width="11" height="19" fill="#fff" stroke="#6f9a62" stroke-width="1"/>
<g fill="#2f9e5e"><rect x="17.5" y="5" width="4" height="2.6"/><rect x="22.5" y="5" width="4" height="2.6"/><rect x="17.5" y="8.3" width="4" height="2.6"/><rect x="22.5" y="8.3" width="4" height="2.6"/><rect x="17.5" y="11.6" width="4" height="2.6"/><rect x="22.5" y="11.6" width="4" height="2.6"/><rect x="17.5" y="14.9" width="4" height="2.6"/><rect x="22.5" y="14.9" width="4" height="2.6"/><rect x="17.5" y="18.2" width="4" height="2.6"/><rect x="22.5" y="18.2" width="4" height="2.6"/></g>
<path d="M1.5 2.5 L17 0.5 V25.5 L1.5 23.5z" fill="#35a06a"/>
<text x="9" y="17.5" text-anchor="middle" font-family="Liberation Sans" font-size="10.5" font-weight="bold" fill="#fff">X</text></svg><div class="t" style="left:129px;top:294.83px;font-size:13.2px;letter-spacing:-0.75px">EXCEL</div><div class="t" style="left:279px;top:283.64px;font-size:14.6px;letter-spacing:0.089px">Import attributes from paper spaces from Excel</div><svg class="a" style="left:1191px;top:291px" width="24" height="18" viewBox="0 0 24 18"><rect x=".5" y=".5" width="23.5" height="17.5" rx="4" fill="#ff3d00" stroke="#6a4a40" stroke-width=".6"/><path d="M10 5 L17 9 L10 13z" fill="#fff"/></svg><div class="a" style="left:0;top:320px;width:1266px;height:40px;background:#e3e3e3"></div><svg class="a" style="left:47px;top:327px" width="28" height="26" viewBox="0 0 28 26"><rect x="16.5" y="3.5" width="11" height="19" fill="#fff" stroke="#6f9a62" stroke-width="1"/>
<g fill="#2f9e5e"><rect x="17.5" y="5" width="4" height="2.6"/><rect x="22.5" y="5" width="4" height="2.6"/><rect x="17.5" y="8.3" width="4" height="2.6"/><rect x="22.5" y="8.3" width="4" height="2.6"/><rect x="17.5" y="11.6" width="4" height="2.6"/><rect x="22.5" y="11.6" width="4" height="2.6"/><rect x="17.5" y="14.9" width="4" height="2.6"/><rect x="22.5" y="14.9" width="4" height="2.6"/><rect x="17.5" y="18.2" width="4" height="2.6"/><rect x="22.5" y="18.2" width="4" height="2.6"/></g>
<path d="M1.5 2.5 L17 0.5 V25.5 L1.5 23.5z" fill="#35a06a"/>
<text x="9" y="17.5" text-anchor="middle" font-family="Liberation Sans" font-size="10.5" font-weight="bold" fill="#fff">X</text></svg><div class="t" style="left:129px;top:334.83px;font-size:13.2px;letter-spacing:-0.75px">EXCEL</div><div class="t" style="left:279px;top:323.64px;font-size:14.6px;letter-spacing:0.047px">Export attributes from paper spaces to Excel</div><svg class="a" style="left:1191px;top:331px" width="24" height="18" viewBox="0 0 24 18"><rect x=".5" y=".5" width="23.5" height="17.5" rx="4" fill="#ff3d00" stroke="#6a4a40" stroke-width=".6"/><path d="M10 5 L17 9 L10 13z" fill="#fff"/></svg><div class="a" style="left:0;top:360px;width:1266px;height:40px;background:#e3e3e3"></div><svg class="a" style="left:47px;top:367px" width="28" height="26" viewBox="0 0 28 26"><rect x="16.5" y="3.5" width="11" height="19" fill="#fff" stroke="#6f9a62" stroke-width="1"/>
<g fill="#2f9e5e"><rect x="17.5" y="5" width="4" height="2.6"/><rect x="22.5" y="5" width="4" height="2.6"/><rect x="17.5" y="8.3" width="4" height="2.6"/><rect x="22.5" y="8.3" width="4" height="2.6"/><rect x="17.5" y="11.6" width="4" height="2.6"/><rect x="22.5" y="11.6" width="4" height="2.6"/><rect x="17.5" y="14.9" width="4" height="2.6"/><rect x="22.5" y="14.9" width="4" height="2.6"/><rect x="17.5" y="18.2" width="4" height="2.6"/><rect x="22.5" y="18.2" width="4" height="2.6"/></g>
<path d="M1.5 2.5 L17 0.5 V25.5 L1.5 23.5z" fill="#35a06a"/>
<text x="9" y="17.5" text-anchor="middle" font-family="Liberation Sans" font-size="10.5" font-weight="bold" fill="#fff">X</text></svg><div class="t" style="left:129px;top:374.83px;font-size:13.2px;letter-spacing:-0.75px">EXCEL</div><div class="t" style="left:279px;top:363.64px;font-size:14.6px;letter-spacing:-0.216px">Export texts from MODEL space to EXCEL</div><svg class="a" style="left:1191px;top:371px" width="24" height="18" viewBox="0 0 24 18"><rect x=".5" y=".5" width="23.5" height="17.5" rx="4" fill="#ff3d00" stroke="#6a4a40" stroke-width=".6"/><path d="M10 5 L17 9 L10 13z" fill="#fff"/></svg><div class="a" style="left:0;top:400px;width:1266px;height:40px;background:#e3e3e3"></div><svg class="a" style="left:47px;top:407px" width="28" height="26" viewBox="0 0 28 26"><rect x="16.5" y="3.5" width="11" height="19" fill="#fff" stroke="#6f9a62" stroke-width="1"/>
<g fill="#2f9e5e"><rect x="17.5" y="5" width="4" height="2.6"/><rect x="22.5" y="5" width="4" height="2.6"/><rect x="17.5" y="8.3" width="4" height="2.6"/><rect x="22.5" y="8.3" width="4" height="2.6"/><rect x="17.5" y="11.6" width="4" height="2.6"/><rect x="22.5" y="11.6" width="4" height="2.6"/><rect x="17.5" y="14.9" width="4" height="2.6"/><rect x="22.5" y="14.9" width="4" height="2.6"/><rect x="17.5" y="18.2" width="4" height="2.6"/><rect x="22.5" y="18.2" width="4" height="2.6"/></g>
<path d="M1.5 2.5 L17 0.5 V25.5 L1.5 23.5z" fill="#35a06a"/>
<text x="9" y="17.5" text-anchor="middle" font-family="Liberation Sans" font-size="10.5" font-weight="bold" fill="#fff">X</text></svg><div class="t" style="left:129px;top:414.83px;font-size:13.2px;letter-spacing:-0.75px">EXCEL</div><div class="t" style="left:279px;top:403.64px;font-size:14.6px;letter-spacing:-0.184px">Export texts from paper spaces to EXCEL</div><svg class="a" style="left:1191px;top:411px" width="24" height="18" viewBox="0 0 24 18"><rect x=".5" y=".5" width="23.5" height="17.5" rx="4" fill="#ff3d00" stroke="#6a4a40" stroke-width=".6"/><path d="M10 5 L17 9 L10 13z" fill="#fff"/></svg><div class="a" style="left:0;top:440px;width:1266px;height:40px;background:#e3e3e3"></div><svg class="a" style="left:47px;top:447px" width="28" height="26" viewBox="0 0 28 26"><rect x="16.5" y="3.5" width="11" height="19" fill="#fff" stroke="#6f9a62" stroke-width="1"/>
<g fill="#2f9e5e"><rect x="17.5" y="5" width="4" height="2.6"/><rect x="22.5" y="5" width="4" height="2.6"/><rect x="17.5" y="8.3" width="4" height="2.6"/><rect x="22.5" y="8.3" width="4" height="2.6"/><rect x="17.5" y="11.6" width="4" height="2.6"/><rect x="22.5" y="11.6" width="4" height="2.6"/><rect x="17.5" y="14.9" width="4" height="2.6"/><rect x="22.5" y="14.9" width="4" height="2.6"/><rect x="17.5" y="18.2" width="4" height="2.6"/><rect x="22.5" y="18.2" width="4" height="2.6"/></g>
<path d="M1.5 2.5 L17 0.5 V25.5 L1.5 23.5z" fill="#35a06a"/>
<text x="9" y="17.5" text-anchor="middle" font-family="Liberation Sans" font-size="10.5" font-weight="bold" fill="#fff">X</text></svg><div class="t" style="left:129px;top:454.83px;font-size:13.2px;letter-spacing:-0.75px">EXCEL</div><div class="t" style="left:279px;top:443.64px;font-size:14.6px;letter-spacing:0.123px">Import the attributes of all DWGs from a single Excel file</div><svg class="a" style="left:1191px;top:451px" width="24" height="18" viewBox="0 0 24 18"><rect x=".5" y=".5" width="23.5" height="17.5" rx="4" fill="#ff3d00" stroke="#6a4a40" stroke-width=".6"/><path d="M10 5 L17 9 L10 13z" fill="#fff"/></svg><div class="a" style="left:0;top:480px;width:1266px;height:40px;background:#e3e3e3"></div><svg class="a" style="left:47px;top:487px" width="28" height="26" viewBox="0 0 28 26"><rect x="16.5" y="3.5" width="11" height="19" fill="#fff" stroke="#6f9a62" stroke-width="1"/>
<g fill="#2f9e5e"><rect x="17.5" y="5" width="4" height="2.6"/><rect x="22.5" y="5" width="4" height="2.6"/><rect x="17.5" y="8.3" width="4" height="2.6"/><rect x="22.5" y="8.3" width="4" height="2.6"/><rect x="17.5" y="11.6" width="4" height="2.6"/><rect x="22.5" y="11.6" width="4" height="2.6"/><rect x="17.5" y="14.9" width="4" height="2.6"/><rect x="22.5" y="14.9" width="4" height="2.6"/><rect x="17.5" y="18.2" width="4" height="2.6"/><rect x="22.5" y="18.2" width="4" height="2.6"/></g>
<path d="M1.5 2.5 L17 0.5 V25.5 L1.5 23.5z" fill="#35a06a"/>
<text x="9" y="17.5" text-anchor="middle" font-family="Liberation Sans" font-size="10.5" font-weight="bold" fill="#fff">X</text></svg><div class="t" style="left:129px;top:494.83px;font-size:13.2px;letter-spacing:-0.75px">EXCEL</div><div class="t" style="left:279px;top:483.64px;font-size:14.6px;letter-spacing:0.062px">Export attributes from all DWGs to one Excel file</div><svg class="a" style="left:1191px;top:491px" width="24" height="18" viewBox="0 0 24 18"><rect x=".5" y=".5" width="23.5" height="17.5" rx="4" fill="#ff3d00" stroke="#6a4a40" stroke-width=".6"/><path d="M10 5 L17 9 L10 13z" fill="#fff"/></svg><div class="a" style="left:0;top:520px;width:1266px;height:40px;background:#e3e3e3"></div><svg class="a" style="left:47px;top:527px" width="28" height="26" viewBox="0 0 28 26"><path d="M0.5 7.5 L8.5 5 L19 2 L29.5 13.5 L11 23 L0.5 9z" fill="#8a3610"/>
<path d="M8 5.5 L19 2.5 L28.5 12.5 L12.5 18.5 L6.5 9.5z" fill="#e2412b"/>
<path d="M12 4.5 L19 2.5 L24 8 L14 11z" fill="#ef5d42"/>
<path d="M12.5 18.5 L28.5 12.5 L29.5 13.5 L11 23 L10 21z" fill="#6b1c0c"/>
<path d="M0.5 8 L4 7 L11 21 L11 23z" fill="#5e1a08" opacity=".6"/>
<text x="16" y="14" text-anchor="middle" font-family="Liberation Sans" font-weight="bold" font-size="7" fill="#fff" transform="rotate(-38 16 12)">.pdf</text></svg><div class="t" style="left:129px;top:534.83px;font-size:13.2px;letter-spacing:0px">PDF</div><div class="t" style="left:279px;top:523.64px;font-size:14.6px;letter-spacing:-0.111px">Create a PDF of the DWG file</div><svg class="a" style="left:1191px;top:531px" width="24" height="18" viewBox="0 0 24 18"><rect x=".5" y=".5" width="23.5" height="17.5" rx="4" fill="#ff3d00" stroke="#6a4a40" stroke-width=".6"/><path d="M10 5 L17 9 L10 13z" fill="#fff"/></svg><div class="a" style="left:0;top:560px;width:1266px;height:40px;background:#e3e3e3"></div><svg class="a" style="left:47px;top:567px" width="28" height="26" viewBox="0 0 28 26"><path d="M0.5 7.5 L8.5 5 L19 2 L29.5 13.5 L11 23 L0.5 9z" fill="#8a3610"/>
<path d="M8 5.5 L19 2.5 L28.5 12.5 L12.5 18.5 L6.5 9.5z" fill="#e2412b"/>
<path d="M12 4.5 L19 2.5 L24 8 L14 11z" fill="#ef5d42"/>
<path d="M12.5 18.5 L28.5 12.5 L29.5 13.5 L11 23 L10 21z" fill="#6b1c0c"/>
<path d="M0.5 8 L4 7 L11 21 L11 23z" fill="#5e1a08" opacity=".6"/>
<text x="16" y="14" text-anchor="middle" font-family="Liberation Sans" font-weight="bold" font-size="7" fill="#fff" transform="rotate(-38 16 12)">.pdf</text></svg><div class="t" style="left:129px;top:574.83px;font-size:13.2px;letter-spacing:0px">PDF</div><div class="t" style="left:279px;top:563.64px;font-size:14.6px;letter-spacing:0.039px">Create a PDF of the DWG file (with layout selection)</div><svg class="a" style="left:1191px;top:571px" width="24" height="18" viewBox="0 0 24 18"><rect x=".5" y=".5" width="23.5" height="17.5" rx="4" fill="#ff3d00" stroke="#6a4a40" stroke-width=".6"/><path d="M10 5 L17 9 L10 13z" fill="#fff"/></svg><div class="a" style="left:0;top:600px;width:1266px;height:40px;background:#e3e3e3"></div><svg class="a" style="left:47px;top:607px" width="28" height="26" viewBox="0 0 28 26"><path d="M0.5 7.5 L8.5 5 L19 2 L29.5 13.5 L11 23 L0.5 9z" fill="#8a3610"/>
<path d="M8 5.5 L19 2.5 L28.5 12.5 L12.5 18.5 L6.5 9.5z" fill="#e2412b"/>
<path d="M12 4.5 L19 2.5 L24 8 L14 11z" fill="#ef5d42"/>
<path d="M12.5 18.5 L28.5 12.5 L29.5 13.5 L11 23 L10 21z" fill="#6b1c0c"/>
<path d="M0.5 8 L4 7 L11 21 L11 23z" fill="#5e1a08" opacity=".6"/>
<text x="16" y="14" text-anchor="middle" font-family="Liberation Sans" font-weight="bold" font-size="7" fill="#fff" transform="rotate(-38 16 12)">.pdf</text></svg><div class="t" style="left:129px;top:614.83px;font-size:13.2px;letter-spacing:0px">PDF</div><div class="t" style="left:279px;top:603.64px;font-size:14.6px;letter-spacing:0.000px">Print the DWG into multiple PDFs</div><svg class="a" style="left:1191px;top:611px" width="24" height="18" viewBox="0 0 24 18"><rect x=".5" y=".5" width="23.5" height="17.5" rx="4" fill="#ff3d00" stroke="#6a4a40" stroke-width=".6"/><path d="M10 5 L17 9 L10 13z" fill="#fff"/></svg></div><div class="a" style="left:1856px;top:264px;width:1px;height:616px;background:#fff"></div><div class="a" style="left:1856px;top:244px;width:17px;height:20px;background:#f0f0f0"></div><div class="a" style="left:1857px;top:264px;width:15px;height:616px;background:#f0f0f0"></div><div class="a" style="left:1864px;top:261px;width:2px;height:147px;background:#7b7f7d;border-radius:1px"></div><div class="a" style="left:287px;top:887px;width:1586px;height:124px;background:#fff;border:1px solid #646464;box-sizing:border-box"></div><div class="a" style="left:288px;top:888px;width:1583px;height:30px;background:linear-gradient(#fdfdfd,#f8f8f8 45%,#f0f0f0)"></div><div class="a" style="left:288px;top:918px;width:1584px;height:92px;background:#f0f0f0"></div><div class="a" style="left:1871px;top:888px;width:1px;height:122px;background:#fff"></div><div class="a" style="left:291px;top:892px;width:1px;height:23px;background:#c6c6c6"></div><div class="a" style="left:292px;top:893px;width:1px;height:23px;background:#fff"></div><svg class="a" style="left:303px;top:896px;overflow:visible" width="15" height="15" viewBox="0 0 15 15"><circle cx="6.6" cy="7.4" r="6.6" fill="#f9cb0d"/><path d="M10 12 L13.5 14.5 L11.5 11z" fill="#f9cb0d"/><text x="6.6" y="11.5" text-anchor="middle" font-family="Liberation Serif" font-weight="bold" font-size="10" fill="#fff">i</text></svg><div class="t" style="left:320px;top:897.27px;font-size:11.5px;font-weight:bold;color:#000;letter-spacing:0.143px;">Execution info:</div><div class="a" style="left:420px;top:892px;width:1px;height:23px;background:#c6c6c6"></div><div class="a" style="left:421px;top:893px;width:1px;height:23px;background:#fff"></div><div class="t" style="left:289px;top:919.84px;font-size:12px;font-weight:normal;color:#000;letter-spacing:0.032px;">Opening file: C:\Users\user\Downloads\Plan implantation (54).dwg</div><svg class="a" style="left:0;top:0" width="1902" height="1022"><rect x="290" y="943" width="1" height="2" fill="#1b0a1e"/><rect x="293" y="943" width="1" height="2" fill="#1b0a1e"/><rect x="296" y="943" width="1" height="2" fill="#1b0a1e"/><rect x="299" y="943" width="1" height="2" fill="#1b0a1e"/><rect x="302" y="943" width="1" height="2" fill="#1b0a1e"/><rect x="305" y="943" width="1" height="2" fill="#1b0a1e"/><rect x="308" y="943" width="1" height="2" fill="#1b0a1e"/><rect x="311" y="943" width="1" height="2" fill="#1b0a1e"/><rect x="314" y="943" width="1" height="2" fill="#1b0a1e"/><rect x="317" y="943" width="1" height="2" fill="#1b0a1e"/><rect x="320" y="943" width="1" height="2" fill="#1b0a1e"/><rect x="323" y="943" width="1" height="2" fill="#1b0a1e"/><rect x="326" y="943" width="1" height="2" fill="#1b0a1e"/><rect x="329" y="943" width="1" height="2" fill="#1b0a1e"/><rect x="332" y="943" width="1" height="2" fill="#1b0a1e"/></svg><svg class="a" style="left:0;top:0" width="1902" height="1022"><path d="M289.4 960.7 L293.4 951.1 M294.4 960.7 L298.4 951.1 M299.4 960.7 L303.4 951.1 M304.4 960.7 L308.4 951.1 M309.4 960.7 L313.4 951.1 M314.4 960.7 L318.4 951.1 M319.4 960.7 L323.4 951.1 M324.4 960.7 L328.4 951.1 M329.4 960.7 L333.4 951.1 M334.4 960.7 L338.4 951.1 M339.4 960.7 L343.4 951.1 M344.4 960.7 L348.4 951.1 M349.4 960.7 L353.4 951.1 M354.4 960.7 L358.4 951.1 M359.4 960.7 L363.4 951.1 M364.4 960.7 L368.4 951.1 M369.4 960.7 L373.4 951.1 M374.4 960.7 L378.4 951.1 M379.4 960.7 L383.4 951.1 M384.4 960.7 L388.4 951.1 M389.4 960.7 L393.4 951.1 M394.4 960.7 L398.4 951.1 M399.4 960.7 L403.4 951.1 M404.4 960.7 L408.4 951.1 M409.4 960.7 L413.4 951.1 M414.4 960.7 L418.4 951.1 M419.4 960.7 L423.4 951.1 M424.4 960.7 L428.4 951.1 M429.4 960.7 L433.4 951.1 M434.4 960.7 L438.4 951.1 M439.4 960.7 L443.4 951.1 M444.4 960.7 L448.4 951.1 M449.4 960.7 L453.4 951.1 M454.4 960.7 L458.4 951.1 M459.4 960.7 L463.4 951.1 M464.4 960.7 L468.4 951.1 M469.4 960.7 L473.4 951.1 M474.4 960.7 L478.4 951.1 M479.4 960.7 L483.4 951.1 M484.4 960.7 L488.4 951.1 M489.4 960.7 L493.4 951.1 M494.4 960.7 L498.4 951.1 M499.4 960.7 L503.4 951.1 M504.4 960.7 L508.4 951.1 M509.4 960.7 L513.4 951.1 M514.4 960.7 L518.4 951.1 M519.4 960.7 L523.4 951.1 M524.4 960.7 L528.4 951.1 M529.4 960.7 L533.4 951.1 M534.4 960.7 L538.4 951.1 M539.4 960.7 L543.4 951.1 M544.4 960.7 L548.4 951.1 M549.4 960.7 L553.4 951.1 M554.4 960.7 L558.4 951.1 M559.4 960.7 L563.4 951.1 M564.4 960.7 L568.4 951.1 M569.4 960.7 L573.4 951.1 M574.4 960.7 L578.4 951.1 " stroke="#14142a" stroke-width="1.05"/></svg><div class="t" style="left:289px;top:965.18px;font-size:11.6px;font-weight:normal;color:#000;letter-spacing:0.023px;">10/22/2025 12:02:18 PM - Processing completed</div><svg class="a" style="left:0;top:0" width="1902" height="1022"><path d="M289.4 990.7 L293.4 981.1 M294.4 990.7 L298.4 981.1 M299.4 990.7 L303.4 981.1 M304.4 990.7 L308.4 981.1 M309.4 990.7 L313.4 981.1 M314.4 990.7 L318.4 981.1 M319.4 990.7 L323.4 981.1 M324.4 990.7 L328.4 981.1 M329.4 990.7 L333.4 981.1 M334.4 990.7 L338.4 981.1 M339.4 990.7 L343.4 981.1 M344.4 990.7 L348.4 981.1 M349.4 990.7 L353.4 981.1 M354.4 990.7 L358.4 981.1 M359.4 990.7 L363.4 981.1 M364.4 990.7 L368.4 981.1 M369.4 990.7 L373.4 981.1 M374.4 990.7 L378.4 981.1 M379.4 990.7 L383.4 981.1 M384.4 990.7 L388.4 981.1 M389.4 990.7 L393.4 981.1 M394.4 990.7 L398.4 981.1 M399.4 990.7 L403.4 981.1 M404.4 990.7 L408.4 981.1 M409.4 990.7 L413.4 981.1 M414.4 990.7 L418.4 981.1 M419.4 990.7 L423.4 981.1 M424.4 990.7 L428.4 981.1 M429.4 990.7 L433.4 981.1 M434.4 990.7 L438.4 981.1 M439.4 990.7 L443.4 981.1 M444.4 990.7 L448.4 981.1 M449.4 990.7 L453.4 981.1 M454.4 990.7 L458.4 981.1 M459.4 990.7 L463.4 981.1 M464.4 990.7 L468.4 981.1 M469.4 990.7 L473.4 981.1 M474.4 990.7 L478.4 981.1 M479.4 990.7 L483.4 981.1 M484.4 990.7 L488.4 981.1 M489.4 990.7 L493.4 981.1 M494.4 990.7 L498.4 981.1 M499.4 990.7 L503.4 981.1 M504.4 990.7 L508.4 981.1 M509.4 990.7 L513.4 981.1 M514.4 990.7 L518.4 981.1 M519.4 990.7 L523.4 981.1 M524.4 990.7 L528.4 981.1 M529.4 990.7 L533.4 981.1 M534.4 990.7 L538.4 981.1 M539.4 990.7 L543.4 981.1 M544.4 990.7 L548.4 981.1 M549.4 990.7 L553.4 981.1 M554.4 990.7 L558.4 981.1 M559.4 990.7 L563.4 981.1 M564.4 990.7 L568.4 981.1 M569.4 990.7 L573.4 981.1 M574.4 990.7 L578.4 981.1 " stroke="#14142a" stroke-width="1.05"/></svg><div class="a" style="left:1855px;top:918px;width:1px;height:91px;background:#fff"></div><div class="a" style="left:1864px;top:964px;width:2px;height:29px;background:#7b7f7d"></div>
</body></html>
